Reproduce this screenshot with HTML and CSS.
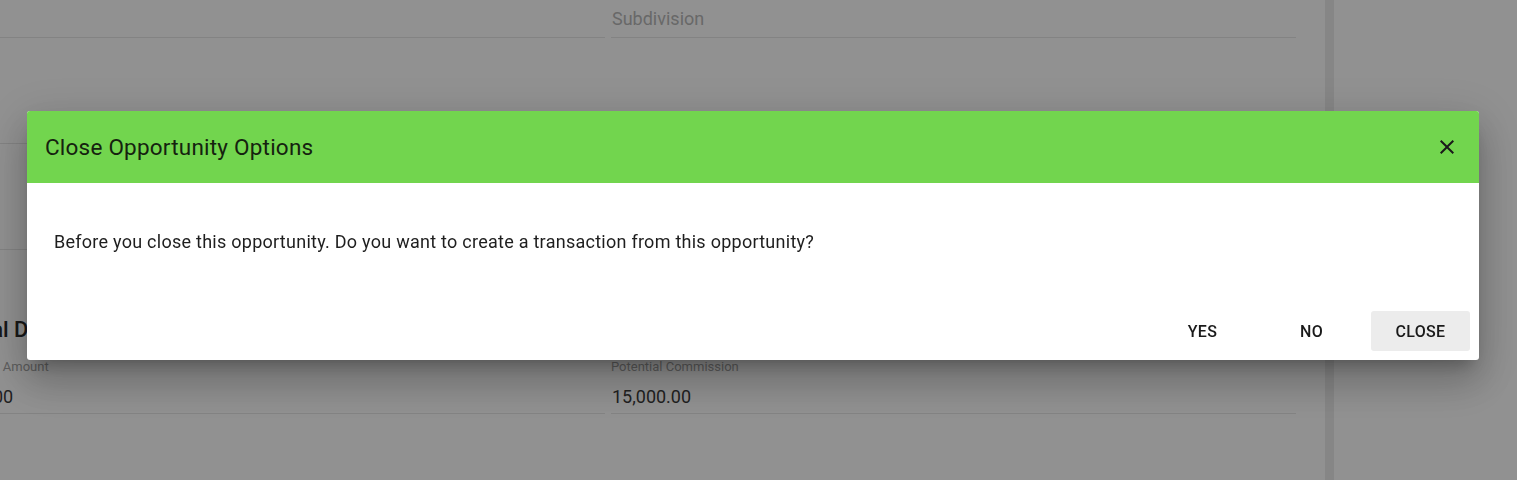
FILE: index.html
```html
<!DOCTYPE html>
<html lang="en">
<head>
<meta charset="utf-8">
<title>Opportunity</title>
<link rel="stylesheet" href="styles.css">
</head>
<body>

<div class="page">
  <main class="form">
    <div class="row first">
      <div class="field"><div class="value"></div></div>
      <div class="field"><div class="value placeholder">Subdivision</div></div>
    </div>
    <div class="row">
      <div class="field tall"></div>
      <div class="field tall blank"></div>
    </div>
    <div class="row">
      <div class="field tall"></div>
      <div class="field tall blank"></div>
    </div>

    <h3 class="section">Financial Details</h3>

    <div class="row">
      <div class="field">
        <div class="label">Potential Sale Amount</div>
        <div class="value indent">150,000.00</div>
      </div>
      <div class="field">
        <div class="label">Potential Commission</div>
        <div class="value">15,000.00</div>
      </div>
    </div>
  </main>
  <div class="divider"></div>
  <aside class="side"></aside>
</div>

<div class="backdrop"></div>

<div class="dialog" role="dialog">
  <div class="dialog-head">
    <h2 class="dialog-title">Close Opportunity Options</h2>
    <button class="icon-btn" title="Close">
      <svg width="24" height="24" viewBox="0 0 24 24"><path d="M19 6.41 17.59 5 12 10.59 6.41 5 5 6.41 10.59 12 5 17.59 6.41 19 12 13.41 17.59 19 19 17.59 13.41 12z"/></svg>
    </button>
  </div>
  <div class="dialog-body">
    Before you close this opportunity. Do you want to create a transaction from this opportunity?
  </div>
  <div class="dialog-actions">
    <button class="btn">Yes</button>
    <button class="btn">No</button>
    <button class="btn grey">Close</button>
  </div>
</div>

</body>
</html>
```

FILE: styles.css
```css
body { margin:0; font-family:Roboto, "Liberation Sans", sans-serif; background:#fff; overflow:hidden; }

.page { display:flex; height:100vh; }
.form { margin-left:-80px; width:1376px; flex:none; }
.divider { margin-left:29px; width:9px; background:#ececec; flex:none; }
.side { flex:1; }

.row { display:flex; gap:6px; }
.field { flex:1; box-sizing:border-box; height:70px; padding:15px 0 4px; border-bottom:1px solid #e6e6e6; }
.field.tall { height:106px; }
.field.blank { border-bottom-color:transparent; }
.row.first .field { height:38px; padding:7px 0 6px; }
.label { font-size:13px; line-height:16px; color:#a4a4a4; margin-bottom:10px; }
.value { font-size:18px; line-height:24px; color:#3a3a3a; padding-left:1px; }
.value.indent { padding-left:4px; }
.value.placeholder { color:#b8b8b8; }
.section { margin:66px 0 0; font-size:22px; line-height:28px; font-weight:500; color:#2a2a2a; }

.backdrop { position:fixed; inset:0; background:rgba(0,0,0,.43); }

.dialog { position:fixed; left:27px; top:111px; width:1452px; background:#fff; border-radius:3px; overflow:hidden;
  box-shadow:0 11px 15px -7px rgba(0,0,0,.25), 0 24px 38px 3px rgba(0,0,0,.16), 0 9px 46px 8px rgba(0,0,0,.12); }
.dialog-head { height:72px; background:#72d54e; display:flex; align-items:center; justify-content:space-between; padding:0 20px 0 18px; }
.dialog-title { margin:0; font-size:22.5px; font-weight:400; color:#15220f; letter-spacing:.22px; }
.icon-btn { border:0; background:none; padding:0; width:24px; height:24px; cursor:pointer; }
.icon-btn svg { display:block; fill:#1a1a1a; }
.dialog-body { padding:47px 27px 48px; font-size:18px; line-height:24px; color:#1e1e1e; letter-spacing:.26px; }
.dialog-actions { display:flex; justify-content:flex-end; gap:10px; padding:9px; }
.btn { min-width:99px; height:40px; border:0; border-radius:3px; background:none; font-family:inherit; font-size:16px;
  font-weight:500; text-transform:uppercase; color:#1a1a1a; letter-spacing:.3px; cursor:pointer; }
.btn.grey { background:#ececec; }
```
